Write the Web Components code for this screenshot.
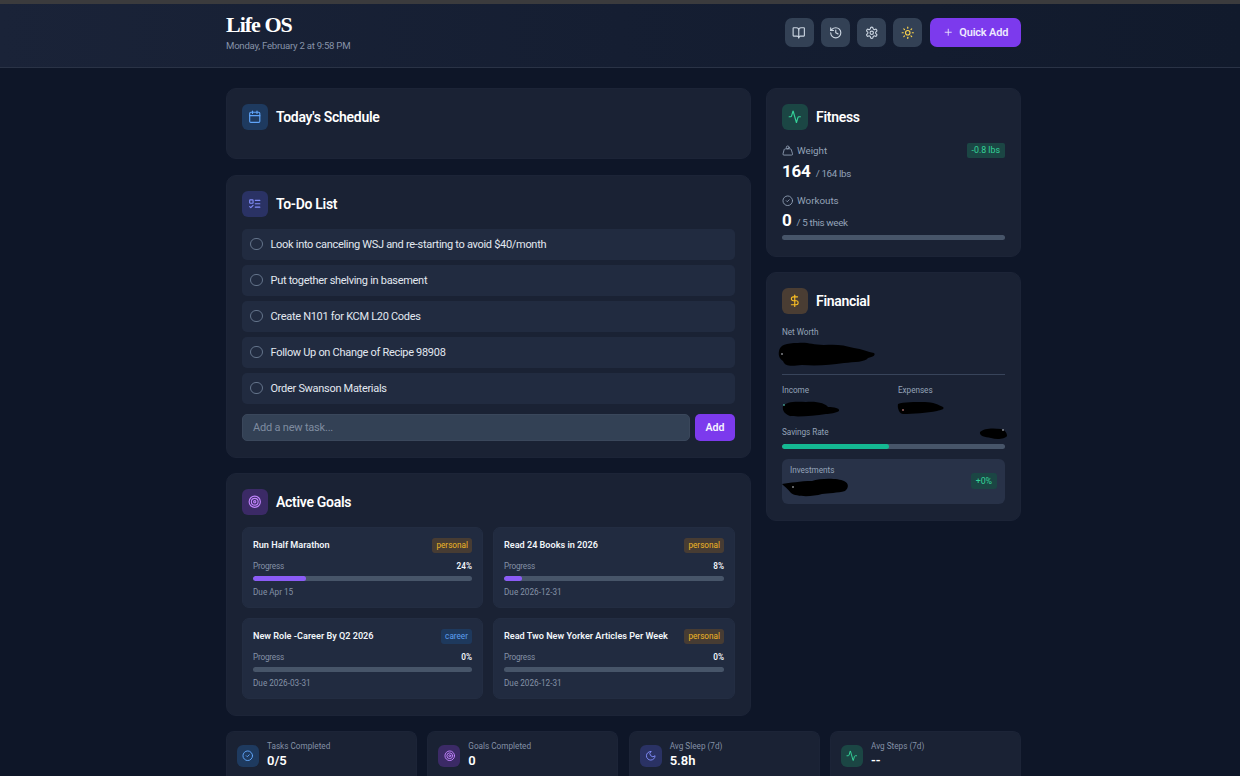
<!DOCTYPE html>
<html lang="en">
<head>
<meta charset="utf-8">
<title>Life OS</title>
<style>
  html, body { margin: 0; height: 100%; overflow: hidden; }
  body { background: #0e1628; color: #fff; font-family: Roboto, "Liberation Sans", sans-serif; }
</style>
</head>
<body>

<life-app>
  <life-header slot="header"></life-header>

  <life-card slot="left" title="Today's Schedule" tint="blue" icon="calendar"></life-card>

  <life-card slot="left" title="To-Do List" tint="indigo" icon="list">
    <div style="display:flex;flex-direction:column;gap:5px">
      <todo-item>Look into canceling WSJ and re-starting to avoid $40/month</todo-item>
      <todo-item>Put together shelving in basement</todo-item>
      <todo-item>Create N101 for KCM L20 Codes</todo-item>
      <todo-item>Follow Up on Change of Recipe 98908</todo-item>
      <todo-item>Order Swanson Materials</todo-item>
    </div>
    <task-input></task-input>
  </life-card>

  <life-card slot="left" title="Active Goals" tint="purple" icon="target">
    <div style="display:grid;grid-template-columns:241px 242px;gap:10px">
      <goal-card name="Run Half Marathon" tag="personal" pct="24" due="Due Apr 15"></goal-card>
      <goal-card name="Read 24 Books in 2026" tag="personal" pct="8" due="Due 2026-12-31"></goal-card>
      <goal-card name="New Role -Career By Q2 2026" tag="career" pct="0" due="Due 2026-03-31"></goal-card>
      <goal-card name="Read Two New Yorker Articles Per Week" tag="personal" pct="0" due="Due 2026-12-31"></goal-card>
    </div>
  </life-card>

  <life-card slot="right" title="Fitness" tint="green" icon="activity">
    <fitness-panel></fitness-panel>
  </life-card>

  <life-card slot="right" title="Financial" tint="amber" icon="dollar">
    <finance-panel></finance-panel>
  </life-card>

  <stat-card slot="stats" label="Tasks Completed" value="0/5" tint="blue" icon="check"></stat-card>
  <stat-card slot="stats" label="Goals Completed" value="0" tint="purple" icon="target"></stat-card>
  <stat-card slot="stats" label="Avg Sleep (7d)" value="5.8h" tint="indigo" icon="moon"></stat-card>
  <stat-card slot="stats" label="Avg Steps (7d)" value="--" tint="green" icon="activity"></stat-card>
</life-app>

<script>
  (function lifeOs(customElements) {
    'use strict';

    const ICONS = {
      book: '<path d="M12 7v14"/><path d="M3 18a1 1 0 0 1-1-1V4a1 1 0 0 1 1-1h5a4 4 0 0 1 4 4 4 4 0 0 1 4-4h5a1 1 0 0 1 1 1v13a1 1 0 0 1-1 1h-6a3 3 0 0 0-3 3 3 3 0 0 0-3-3z"/>',
      history: '<path d="M3 12a9 9 0 1 0 9-9 9.75 9.75 0 0 0-6.74 2.74L3 8"/><path d="M3 3v5h5"/><path d="M12 7v5l4 2"/>',
      settings: '<path d="M12.22 2h-.44a2 2 0 0 0-2 2v.18a2 2 0 0 1-1 1.73l-.43.25a2 2 0 0 1-2 0l-.15-.08a2 2 0 0 0-2.73.73l-.22.38a2 2 0 0 0 .73 2.73l.15.1a2 2 0 0 1 1 1.72v.51a2 2 0 0 1-1 1.74l-.15.09a2 2 0 0 0-.73 2.73l.22.38a2 2 0 0 0 2.73.73l.15-.08a2 2 0 0 1 2 0l.43.25a2 2 0 0 1 1 1.73V20a2 2 0 0 0 2 2h.44a2 2 0 0 0 2-2v-.18a2 2 0 0 1 1-1.73l.43-.25a2 2 0 0 1 2 0l.15.08a2 2 0 0 0 2.73-.73l.22-.39a2 2 0 0 0-.73-2.73l-.15-.08a2 2 0 0 1-1-1.74v-.5a2 2 0 0 1 1-1.74l.15-.09a2 2 0 0 0 .73-2.73l-.22-.38a2 2 0 0 0-2.73-.73l-.15.08a2 2 0 0 1-2 0l-.43-.25a2 2 0 0 1-1-1.73V4a2 2 0 0 0-2-2z"/><circle cx="12" cy="12" r="3"/>',
      sun: '<circle cx="12" cy="12" r="4"/><path d="M12 2v2"/><path d="M12 20v2"/><path d="m4.93 4.93 1.41 1.41"/><path d="m17.66 17.66 1.41 1.41"/><path d="M2 12h2"/><path d="M20 12h2"/><path d="m6.34 17.66-1.41 1.41"/><path d="m19.07 4.93-1.41 1.41"/>',
      plus: '<path d="M5 12h14"/><path d="M12 5v14"/>',
      calendar: '<path d="M8 2v4"/><path d="M16 2v4"/><rect width="18" height="18" x="3" y="4" rx="2"/><path d="M3 10h18"/>',
      list: '<rect x="3" y="5" width="6" height="6" rx="1"/><path d="m3 17 2 2 4-4"/><path d="M13 6h8"/><path d="M13 12h8"/><path d="M13 18h8"/>',
      activity: '<path d="M22 12h-2.48a2 2 0 0 0-1.93 1.46l-2.35 8.36a.25.25 0 0 1-.48 0L9.24 2.18a.25.25 0 0 0-.48 0l-2.35 8.36A2 2 0 0 1 4.49 12H2"/>',
      dollar: '<line x1="12" x2="12" y1="2" y2="22"/><path d="M17 5H9.5a3.5 3.5 0 0 0 0 7h5a3.5 3.5 0 0 1 0 7H6"/>',
      target: '<circle cx="12" cy="12" r="10"/><circle cx="12" cy="12" r="6"/><circle cx="12" cy="12" r="2"/>',
      weight: '<circle cx="12" cy="5" r="3"/><path d="M6.5 8a2 2 0 0 0-1.905 1.46L2.1 18.5A2 2 0 0 0 4 21h16a2 2 0 0 0 1.925-2.54L19.4 9.5A2 2 0 0 0 17.48 8Z"/>',
      check: '<circle cx="12" cy="12" r="10"/><path d="m9 12 2 2 4-4"/>',
      moon: '<path d="M12 3a6 6 0 0 0 9 9 9 9 0 1 1-9-9Z"/>'
    };

    const TINTS = {
      blue: ['#1e3a5f', '#60a5fa'],
      indigo: ['#2a3264', '#818cf8'],
      purple: ['#3b2a66', '#c084fc'],
      green: ['#1b4644', '#34d399'],
      amber: ['#4a3d33', '#fbbf24']
    };

    function icon(name, size, color, width) {
      return `<svg xmlns="http://www.w3.org/2000/svg" width="${size}" height="${size}" viewBox="0 0 24 24" fill="none" stroke="${color}" stroke-width="${width || 2}" stroke-linecap="round" stroke-linejoin="round" style="display:block">${ICONS[name]}</svg>`;
    }

    function tintBox(tint, name, box, size) {
      const t = TINTS[tint];
      return `<div style="width:${box}px;height:${box}px;border-radius:6px;background:${t[0]};display:flex;align-items:center;justify-content:center;flex:none">${icon(name, size, t[1])}</div>`;
    }

    class Base extends HTMLElement {
      constructor() {
        super();
        this.attachShadow({ mode: 'open' });
      }
      connectedCallback() {
        this.shadowRoot.innerHTML = this.render();
      }
      attr(name) { return this.getAttribute(name) || ''; }
    }

    class LifeApp extends Base {
      render() {
        return `<style>
          :host { display: block; }
          .strip { height: 4px; background: #3b3b3d; }
          .main { width: 795px; margin: 20px 0 0 226px; }
          .cols { display: grid; grid-template-columns: 525px 255px; gap: 15px; }
          .col { display: flex; flex-direction: column; gap: 15.5px; align-items: stretch; align-self: start; }
          .col + .col { gap: 15px; }
          .stats { display: grid; grid-template-columns: repeat(4, 1fr); gap: 10.4px; margin-top: 15px; }
        </style>
        <div class="strip"></div>
        <slot name="header"></slot>
        <div class="main">
          <div class="cols">
            <div class="col"><slot name="left"></slot></div>
            <div class="col"><slot name="right"></slot></div>
          </div>
          <div class="stats"><slot name="stats"></slot></div>
        </div>`;
      }
    }

    class LifeHeader extends Base {
      render() {
        const btn = (name, color) => `<div class="btn">${icon(name, 13.5, color)}</div>`;
        return `<style>
          :host { display: block; height: 64px; box-sizing: border-box; border-bottom: 1px solid #2a3346;
                  background: linear-gradient(90deg, #1a2338 0%, #151e32 50%, #111a2c 100%); }
          .in { width: 795px; margin-left: 226px; height: 100%; display: flex; justify-content: space-between; }
          h1 { margin: 0; padding-top: 8px; font: 700 22px/26px "Liberation Serif", serif; letter-spacing: -1px; color: #fff; }
          p { margin: 1px 0 0; font-size: 9.6px; line-height: 13px; letter-spacing: -.25px; color: #8793a8; }
          .acts { display: flex; gap: 7.2px; padding-top: 14px; height: 29px; }
          .btn { width: 29px; height: 29px; border-radius: 7px; background: #334155; display: flex; align-items: center; justify-content: center; }
          .add { margin-left: .6px; width: 91px; height: 29px; border-radius: 7px; background: #7c3aed; display: flex; align-items: center; justify-content: center; gap: 6px;
                 font-size: 11px; font-weight: 600; letter-spacing: -.2px; color: #ede9fe; }
        </style>
        <div class="in">
          <div><h1>Life OS</h1><p>Monday, February 2 at 9:58 PM</p></div>
          <div class="acts">
            ${btn('book', '#cbd5e1')}${btn('history', '#cbd5e1')}${btn('settings', '#cbd5e1')}${btn('sun', '#fcd34d')}
            <div class="add">${icon('plus', 10.5, '#ede9fe')}<span>Quick Add</span></div>
          </div>
        </div>`;
      }
    }

    class LifeCard extends Base {
      render() {
        return `<style>
          :host { display: block; box-sizing: border-box; padding: 16px; background: #1a2234; border: 1px solid #1c2437; border-radius: 10px; }
          .head { display: flex; align-items: center; gap: 8px; height: 26px; margin: -1px 0 12px -1px; }
          h2 { margin: 0; font-size: 14px; line-height: 26px; font-weight: 600; letter-spacing: -.3px; color: #fff; }
          .body { margin: 0 -1px; }
        </style>
        <div class="head">${tintBox(this.attr('tint'), this.attr('icon'), 26, 13.5)}<h2>${this.attr('title')}</h2></div>
        <div class="body"><slot></slot></div>`;
      }
    }

    class TodoItem extends Base {
      render() {
        return `<style>
          :host { display: flex; align-items: center; gap: 8px; height: 31px; padding: 0 8px; border-radius: 5px; background: #212b40; font-size: 11px; letter-spacing: -.3px; color: #e2e8f0; }
          i { width: 10.5px; height: 10.5px; border-radius: 50%; border: 1.3px solid #64748b; flex: none; }
        </style><i></i><slot></slot>`;
      }
    }

    class TaskInput extends Base {
      render() {
        return `<style>
          :host { display: flex; gap: 5px; margin-top: 10px; }
          .in { flex: 1; height: 27px; box-sizing: border-box; border-radius: 5px; background: #334155; border: 1px solid #3a475b; padding: 0 10px; display: flex; align-items: center; font-size: 11px; letter-spacing: -.2px; color: #7f8ca0; }
          .add { width: 40px; height: 27px; border-radius: 5px; background: #7c3aed; display: flex; align-items: center; justify-content: center; font-size: 10.6px; font-weight: 600; color: #f5f3ff; }
        </style><div class="in">Add a new task...</div><div class="add">Add</div>`;
      }
    }

    class ProgressBar extends Base {
      render() {
        return `<style>
          :host { display: block; height: 5px; border-radius: 3px; background: #475569; overflow: hidden; }
          div { height: 100%; border-radius: 3px; background: ${this.attr('color') || '#8b5cf6'}; width: ${this.attr('pct') || 0}%; }
        </style><div></div>`;
      }
    }

    class GoalCard extends Base {
      render() {
        const career = this.attr('tag') === 'career';
        const tagBg = career ? '#1e3a5f' : '#4a3d33';
        const tagFg = career ? '#60a5fa' : '#fbbf24';
        return `<style>
          :host { display: block; box-sizing: border-box; height: 81px; padding: 11px 10px; background: #212b40; border: 1px solid #232d42; border-radius: 7px; }
          .top { display: flex; justify-content: space-between; align-items: flex-start; height: 22px; margin-top: -1px; }
          b { font-size: 9.1px; line-height: 14px; font-weight: 600; color: #f1f5f9; white-space: nowrap; }
          .tag { height: 15px; line-height: 15px; padding: 0 4px; border-radius: 3px; background: ${tagBg}; color: ${tagFg}; font-size: 8.2px; opacity: .95; }
          .row { display: flex; justify-content: space-between; font-size: 8.2px; line-height: 12px; color: #8491a6; }
          .row span { letter-spacing: -.2px; }
          .row strong { color: #f1f5f9; font-weight: 600; }
          progress-bar { margin-top: 4px; }
          .due { font-size: 8.2px; line-height: 12px; color: #8491a6; margin-top: 5px; }
        </style>
        <div class="top"><b>${this.attr('name')}</b><span class="tag">${this.attr('tag')}</span></div>
        <div class="row"><span>Progress</span><strong>${this.attr('pct')}%</strong></div>
        <progress-bar pct="${this.attr('pct')}"></progress-bar>
        <div class="due">${this.attr('due')}</div>`;
      }
    }

    class FitnessPanel extends Base {
      render() {
        return `<style>
          :host { display: block; }
          .lab { display: flex; align-items: center; gap: 3.5px; height: 15px; font-size: 9.8px; line-height: 15px; color: #94a3b8; }
          .badge { margin-left: auto; height: 15px; padding: 0 5px; border-radius: 2px; background: #1b4644; color: #34d399; font-size: 8.8px; line-height: 15px; }
          .val { display: flex; align-items: baseline; gap: 5px; height: 24px; line-height: 24px; font-size: 9.8px; letter-spacing: -.35px; color: #94a3b8; }
          .val b { font-size: 17px; font-weight: 700; letter-spacing: -.2px; color: #fff; }
          progress-bar { margin-top: 3px; }
        </style>
        <div class="lab" style="padding-top:1px">${icon('weight', 11.5, '#94a3b8', 1.8)}<span>Weight</span><span class="badge" style="margin-top:-1px">-0.8 lbs</span></div>
        <div class="val" style="margin-top:1px"><b>164</b><span>/ 164 lbs</span></div>
        <div class="lab" style="margin-top:10px">${icon('check', 11.5, '#94a3b8', 1.8)}<span>Workouts</span></div>
        <div class="val"><b>0</b><span>/ 5 this week</span></div>
        <progress-bar pct="0"></progress-bar>`;
      }
    }

    class RedactBlob extends Base {
      render() {
        return `<style>:host { display: block; }</style>
        <svg xmlns="http://www.w3.org/2000/svg" width="${this.attr('w')}" height="${this.attr('h')}" viewBox="0 0 ${this.attr('w')} ${this.attr('h')}" style="display:block">
          <path fill="#000" d="${this.attr('d')}"/>
          <circle cx="${this.attr('sx')}" cy="${this.attr('sy')}" r=".8" fill="${this.attr('sc') || '#d6dbe3'}"/>
        </svg>`;
      }
    }

    class FinancePanel extends Base {
      render() {
        return `<style>
          :host { display: block; font-size: 8.2px; line-height: 12px; letter-spacing: -.05px; color: #94a3b8; }
          hr { border: 0; height: 1px; background: #38445a; margin: 5.5px 0 0; }
          .two { display: grid; grid-template-columns: 116px 1fr; margin-top: 9px; }
          .rate { display: flex; justify-content: space-between; align-items: flex-start; height: 18px; margin-top: 9px; }
          .inv { margin-top: 10px; height: 45.5px; box-sizing: border-box; padding: 0 8px; border-radius: 6px; background: #283248; display: flex; justify-content: space-between; align-items: center; }
          .pill { height: 16px; line-height: 16px; padding: 0 5px; border-radius: 3px; background: #1b4644; color: #34d399; font-size: 8.8px; }
        </style>
        <div>Net Worth</div>
        <redact-blob style="margin:4px 0 0 -4px" w="98" h="26" sx="4" sy="12"
          d="M1 9 C2 3 8 1 20 1 C30 0 34 3 46 3 C58 2 66 3 76 6 C84 7 90 10 96 11 C98 13 95 15 90 16 C88 20 76 20 66 21 C52 23 40 24 24 23 C14 24 7 25 5 19 C2 17 0 14 1 9 Z"></redact-blob>
        <hr>
        <div class="two">
          <div>Income<redact-blob style="margin-top:5px" w="58" h="16" sx="2" sy="4" sc="#5eead4"
            d="M1 5 C4 1 12 0 24 1 C36 0 44 3 46 6 C52 6 58 7 57 10 C54 12 48 13 44 13 C32 15 16 16 8 15 C3 13 0 10 1 5 Z"></redact-blob></div>
          <div>Expenses<redact-blob style="margin-top:5px;margin-left:-1px" w="48" h="15" sx="6" sy="9" sc="#fca5a5"
            d="M1 3 C6 1 18 1 28 1 C36 1 42 4 46 6 C48 8 44 9 40 10 C30 12 16 13 6 13 C3 13 0 8 1 3 Z"></redact-blob></div>
        </div>
        <div class="rate"><span>Savings Rate</span><redact-blob style="margin:2px -2px 0 0" w="28" h="12" sx="24" sy="2"
          d="M1 4 C5 0 14 0 22 1 C26 2 28 5 28 8 C26 11 18 12 12 10 C6 9 0 8 1 4 Z"></redact-blob></div>
        <progress-bar pct="48" color="#14b892"></progress-bar>
        <div class="inv">
          <div>Investments<redact-blob style="margin:2px 0 0 -8px" w="67" h="20" sx="11" sy="9"
            d="M0 6 C8 5 18 3 30 3 C38 0 56 0 62 3 C67 5 67 10 63 13 C56 15 46 15 40 16 C30 19 14 19 9 15 C6 11 2 8 0 6 Z"></redact-blob></div>
          <span class="pill">+0%</span>
        </div>`;
      }
    }

    class StatCard extends Base {
      render() {
        return `<style>
          :host { display: flex; gap: 8px; height: 45px; box-sizing: border-box; padding: 13px 10px 0; align-items: flex-start;
                  background: #1a2234; border: 1px solid #1c2437; border-bottom: 0; border-radius: 8px 8px 0 0; }
          .t { display: flex; flex-direction: column; margin-top: -4.5px; }
          span { font-size: 8.2px; line-height: 11px; color: #8491a6; }
          b { font-size: 13px; line-height: 18px; font-weight: 600; color: #fff; }
        </style>
        ${tintBox(this.attr('tint'), this.attr('icon'), 22, 11.5)}
        <div class="t"><span>${this.attr('label')}</span><b>${this.attr('value')}</b></div>`;
      }
    }

    customElements.define('life-app', LifeApp);
    customElements.define('life-header', LifeHeader);
    customElements.define('life-card', LifeCard);
    customElements.define('todo-item', TodoItem);
    customElements.define('task-input', TaskInput);
    customElements.define('progress-bar', ProgressBar);
    customElements.define('goal-card', GoalCard);
    customElements.define('fitness-panel', FitnessPanel);
    customElements.define('redact-blob', RedactBlob);
    customElements.define('finance-panel', FinancePanel);
    customElements.define('stat-card', StatCard);
  })(window.customElements);
</script>
</body>
</html>
